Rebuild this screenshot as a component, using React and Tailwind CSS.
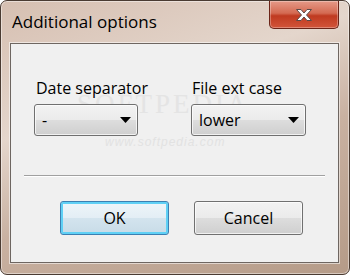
import { useState } from "react";

const Combo = ({ value, width }) => (
  <div
    className={`${width} h-[32px] flex items-center justify-between pl-[7px] pr-[6px] rounded-[3px] border border-[#707070] bg-[linear-gradient(#f2f2f2_0%,#ebebeb_50%,#dddddd_51%,#cfcfcf_100%)] shadow-[inset_0_0_0_1px_rgba(255,255,255,0.7)]`}
  >
    <span className="text-[16px] leading-none text-black">{value}</span>
    <svg width="11" height="6" viewBox="0 0 11 6">
      <path d="M0 0 H11 L5.5 6 Z" fill="#000" />
    </svg>
  </div>
);

const App = () => {
  const [sep] = useState("-");
  const [extCase] = useState("lower");

  return (
    <div className="w-[350px] h-[275px] font-['Segoe_UI','Open_Sans',sans-serif] text-black">
      <div className="relative w-full h-full flex flex-col rounded-[7px] border border-[#4a3b32] bg-[linear-gradient(160deg,#d6bfb1_0%,#e4d6cc_35%,#c9b1a1_60%,#b59b88_100%)] pl-[9px] pr-[10px] pb-[11px] shadow-[inset_0_0_0_1px_rgba(255,255,255,0.45)]">
        {/* Title bar */}
        <div className="h-[42px] flex items-start justify-between">
          <h1 className="pt-[10px] pl-[2px] text-[17px] leading-[22px] text-black">
            Additional options
          </h1>
          <button className="w-[70px] h-[28px] flex items-center justify-center rounded-b-[5px] border border-t-0 border-[#6b2418] bg-[linear-gradient(#e59a88_0%,#d46a52_45%,#bf3a20_55%,#d2553a_100%)] shadow-[inset_0_0_0_1px_rgba(255,255,255,0.3)]">
            <svg width="18" height="14" viewBox="0 0 18 14">
              <path
                d="M1.5 1.5 H6 L9 5 L12 1.5 H16.5 L11.5 7 L16.5 12.5 H12 L9 9 L6 12.5 H1.5 L6.5 7 Z"
                fill="#fff"
                stroke="#5a4a48"
                strokeWidth="1"
                strokeLinejoin="round"
              />
            </svg>
          </button>
        </div>

        {/* Client area */}
        <div className="relative flex-1 flex flex-col border border-[#6e6661] bg-[#f0f0f0] shadow-[0_0_0_1px_rgba(255,255,255,0.55)]">
          {/* watermark */}
          <div className="absolute left-[66px] top-[47px] text-[27px] leading-none tracking-[3px] text-[#e4e4e4] font-['Liberation_Serif',serif] select-none">
            SOFTPEDIA
          </div>
          <div className="absolute left-[94px] top-[92px] text-[12px] leading-none italic tracking-[1px] text-[#e2e2e2] font-['Liberation_Sans',sans-serif] select-none">
            www.softpedia.com
          </div>

          <div className="relative flex gap-[53px] pl-[23px] pt-[34px]">
            <div className="w-[104px] flex flex-col">
              <label className="pl-[2px] whitespace-nowrap text-[16px] leading-[20px] mb-[6px]">
                Date separator
              </label>
              <Combo value={sep} width="w-[104px]" />
            </div>
            <div className="w-[115px] flex flex-col">
              <label className="pl-[1px] whitespace-nowrap text-[16px] leading-[20px] mb-[6px]">
                File ext case
              </label>
              <Combo value={extCase} width="w-[115px]" />
            </div>
          </div>

          <div className="relative mx-[13px] mt-[39px] h-[2px] border-t border-[#a0a0a0] border-b border-b-white" />

          <div className="relative flex pl-[49px] gap-[25px] mt-[24px]">
            <button className="w-[109px] h-[34px] rounded-[3px] border border-[#3c7fb1] bg-[linear-gradient(#eef5f9_0%,#e3eef5_50%,#d3e4ee_51%,#c8dbe7_100%)] shadow-[inset_0_0_0_2px_#5fd0f5] text-[16px] leading-none">
              OK
            </button>
            <button className="w-[109px] h-[34px] rounded-[3px] border border-[#707070] bg-[linear-gradient(#f2f2f2_0%,#ebebeb_50%,#dddddd_51%,#cfcfcf_100%)] shadow-[inset_0_0_0_1px_rgba(255,255,255,0.7)] text-[16px] leading-none">
              Cancel
            </button>
          </div>
        </div>
      </div>
    </div>
  );
};

export default App;
